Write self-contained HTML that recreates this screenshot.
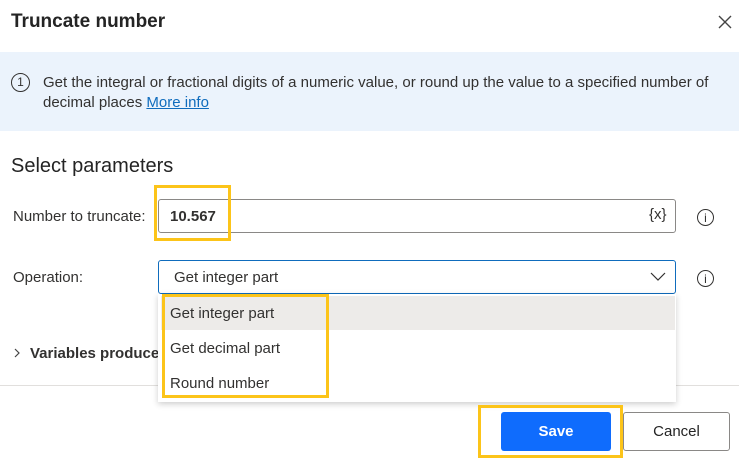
<!DOCTYPE html><html><head><style>
body{margin:0;width:739px;height:458px;background:#fff;font-family:"Liberation Sans",sans-serif;color:#323130;position:relative;overflow:hidden}
.a{position:absolute}
.t{font-size:15px;line-height:18px}
.info{width:17px;height:17px;border:1.3px solid #323130;border-radius:50%;font-size:12px;text-align:center;line-height:16px;box-sizing:border-box}
.y{border:3px solid #fcc419;box-sizing:border-box}
</style></head><body>
<div class="a" style="left:11px;top:11px;font-size:19px;font-weight:bold;color:#242424">Truncate number</div>
<svg class="a" style="left:718px;top:15px" width="14" height="14"><path d="M1 1L13 13M13 1L1 13" stroke="#444" stroke-width="1.4"/></svg>
<div class="a" style="left:0;top:52px;width:739px;height:79px;background:#ebf3fc"></div>
<div class="a info" style="left:11px;top:73px;width:19px;height:19px;line-height:17px">1</div>
<div class="a t" style="left:43px;top:73px;width:680px;line-height:20px">Get the integral or fractional digits of a numeric value, or round up the value to a specified number of decimal places <span style="color:#0f6cbd;text-decoration:underline">More info</span></div>
<div class="a" style="left:11px;top:155px;font-size:20px;color:#242424">Select parameters</div>
<div class="a t" style="left:13px;top:208px">Number to truncate:</div>
<div class="a" style="left:158px;top:199px;width:518px;height:34px;border:1px solid #8a8886;border-radius:3px;box-sizing:border-box"></div>
<div class="a t" style="left:170px;top:208px;font-weight:bold">10.567</div>
<div class="a t" style="left:649px;top:206px">{x}</div>
<div class="a y" style="left:154px;top:185px;width:77px;height:56px"></div>
<div class="a info" style="left:697px;top:209px">i</div>
<div class="a t" style="left:13px;top:269px">Operation:</div>
<div class="a" style="left:158px;top:260px;width:518px;height:34px;border:1px solid #0f6cbd;border-radius:3px;box-sizing:border-box"></div>
<div class="a t" style="left:174px;top:269px">Get integer part</div>
<svg class="a" style="left:650px;top:272px" width="16" height="10"><path d="M1 1L8 8L15 1" stroke="#323130" stroke-width="1.2" fill="none"/></svg>
<div class="a info" style="left:697px;top:270px">i</div>
<div class="a" style="left:0;top:385px;width:739px;height:1px;background:#e1dfdd"></div>
<svg class="a" style="left:14px;top:348px" width="6" height="10"><path d="M1 1L5 5L1 9" stroke="#444" stroke-width="1.2" fill="none"/></svg>
<div class="a t" style="left:30px;top:345px;font-weight:bold">Variables produced</div>
<div class="a" style="left:158px;top:294px;width:518px;height:108px;background:#fff;box-shadow:0 2px 6px rgba(0,0,0,.2)"></div>
<div class="a" style="left:161px;top:296px;width:514px;height:34px;background:#edebe9"></div>
<div class="a t" style="left:170px;top:305px">Get integer part</div>
<div class="a t" style="left:170px;top:340px">Get decimal part</div>
<div class="a t" style="left:170px;top:375px">Round number</div>
<div class="a y" style="left:162px;top:294px;width:167px;height:104px"></div>
<div class="a" style="left:501px;top:412px;width:110px;height:39px;background:#0f6cfd;border-radius:3px;color:#fff;font-weight:bold;font-size:15px;text-align:center;line-height:39px">Save</div>
<div class="a y" style="left:478px;top:405px;width:145px;height:53px"></div>
<div class="a" style="left:623px;top:412px;width:107px;height:39px;border:1px solid #8a8886;border-radius:3px;box-sizing:border-box;font-size:15px;text-align:center;line-height:37px;color:#242424">Cancel</div>
</body></html>
